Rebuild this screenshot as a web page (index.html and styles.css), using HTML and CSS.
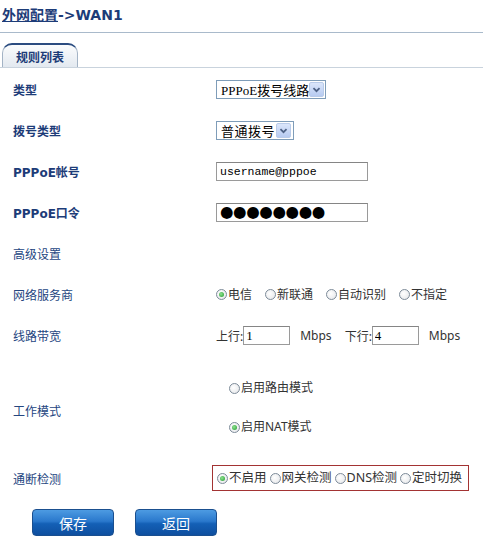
FILE: index.html
```html
<!DOCTYPE html>
<html lang="zh-CN">
  <head>
    <meta charset="UTF-8" />
    <title>外网配置 - WAN1</title>
    <link rel="stylesheet" href="styles.css">
  </head>

  <body>
    <h1 class="page-title"><a href="#">外网配置</a>-&gt;WAN1</h1>

    <div class="tabs">
      <span class="tab">规则列表</span>
    </div>

    <form class="rules">
      <div class="row">
        <span class="label strong">类型</span>
        <div class="select wide">
          <span class="select-text">PPPoE拨号线路</span>
          <span class="select-arrow"><svg viewBox="0 0 15 15"><path d="M4 6 L7.5 9.5 L11 6" /></svg></span>
        </div>
      </div>

      <div class="row">
        <span class="label strong">拨号类型</span>
        <div class="select">
          <span class="select-text big">普通拨号</span>
          <span class="select-arrow"><svg viewBox="0 0 15 15"><path d="M4 6 L7.5 9.5 L11 6" /></svg></span>
        </div>
      </div>

      <div class="row">
        <span class="label strong">PPPoE帐号</span>
        <input class="field mono" type="text" value="username@pppoe" />
      </div>

      <div class="row">
        <span class="label strong">PPPoE口令</span>
        <div class="field dots">●●●●●●●●</div>
      </div>

      <div class="row">
        <span class="label">高级设置</span>
      </div>

      <div class="row">
        <span class="label">网络服务商</span>
        <div class="radios">
          <label class="radio"><span class="dot checked"></span>电信</label>
          <label class="radio"><span class="dot"></span>新联通</label>
          <label class="radio"><span class="dot"></span>自动识别</label>
          <label class="radio"><span class="dot"></span>不指定</label>
        </div>
      </div>

      <div class="row">
        <span class="label">线路带宽</span>
        <div class="bandwidth">
          <span>上行:</span>
          <input class="field small" type="text" value="1" />
          <span class="unit">Mbps</span>
          <span class="down">下行:</span>
          <input class="field small" type="text" value="4" />
          <span class="unit">Mbps</span>
        </div>
      </div>

      <div class="row tall">
        <span class="label">工作模式</span>
        <div class="modes">
          <label class="radio"><span class="dot"></span>启用路由模式</label>
          <label class="radio"><span class="dot checked"></span>启用NAT模式</label>
        </div>
      </div>

      <div class="row short">
        <span class="label">通断检测</span>
        <div class="check-box">
          <label class="radio"><span class="dot checked"></span>不启用</label>
          <label class="radio"><span class="dot"></span>网关检测</label>
          <label class="radio"><span class="dot"></span>DNS检测</label>
          <label class="radio"><span class="dot"></span>定时切换</label>
        </div>
      </div>
    </form>

    <div class="actions">
      <button class="btn" type="button">保存</button>
      <button class="btn" type="button">返回</button>
    </div>
  </body>
</html>
```

FILE: styles.css
```css
*,
*::before,
*::after {
  box-sizing: border-box;
}

body {
  margin: 0;
  background: #fff;
  color: #333;
  font-family: 'Noto Sans', 'Noto Sans CJK SC', sans-serif;
  font-size: 12px;
}

.page-title {
  margin: 0;
  padding: 5px 2px 7px;
  line-height: 20px;
  font-family: 'DejaVu Sans', 'Noto Sans CJK SC', sans-serif;
  font-size: 14px;
  font-weight: bold;
  color: #1d3c78;
  border-bottom: 1px solid #a9bacb;

  a {
    color: #1d3c78;
    text-decoration: underline;
  }
}

.tabs {
  display: flex;
  margin-top: 10px;
  padding-left: 2px;
  border-bottom: 1px solid #c9d3dd;
}

.tab {
  width: 76px;
  height: 24px;
  display: flex;
  align-items: center;
  justify-content: center;
  border: 1px solid #a3b3c5;
  border-top: 2px solid #2b4c80;
  border-bottom: 0;
  border-radius: 10px 10px 0 0;
  background: linear-gradient(#fbfcfd, #e3e9f0);
  font-family: 'Noto Sans CJK SC', sans-serif;
  font-weight: bold;
  font-size: 12px;
  color: #1d3c78;
}

.rules {
  padding-top: 1px;
}

.row {
  display: grid;
  grid-template-columns: 203px 1fr;
  align-items: center;
  height: 41px;
  padding-left: 13px;

  &.tall {
    height: 108px;
  }

  &.short {
    height: 28px;
  }
}

.label {
  font-family: 'Noto Sans CJK SC', sans-serif;
  font-size: 12px;
  color: #25467f;

  &.strong {
    font-family: 'DejaVu Sans', 'Noto Sans CJK SC', sans-serif;
    font-weight: bold;
    color: #1d3c78;
  }
}

.select {
  display: flex;
  align-items: center;
  width: 78px;
  height: 19px;
  padding: 1px 2px 1px 4px;
  border: 1px solid #7f9db9;
  background: #fff;
  justify-content: space-between;

  &.wide {
    width: 110px;
  }

  .select-text {
    font-family: 'Liberation Serif', 'Noto Sans CJK SC', serif;
    font-size: 13px;
    color: #000;
    white-space: nowrap;

    &.big {
      letter-spacing: 0.5px;
    }
  }

  .select-arrow {
    width: 15px;
    height: 15px;
    border: 1px solid #b9cbe9;
    border-radius: 2px;
    background: linear-gradient(#dbe6fb, #b7cbf1);

    svg {
      display: block;
      width: 13px;
      height: 13px;
      fill: none;
      stroke: #4d6185;
      stroke-width: 2;
    }
  }
}

.field {
  width: 152px;
  height: 19px;
  margin: 0;
  padding: 0 3px;
  border: 1px solid #9a9a9a;
  border-top-color: #858585;
  background: #fff;
  color: #000;
  outline: none;

  &.mono {
    font-family: 'Liberation Mono', monospace;
    font-size: 11.5px;
  }

  &.dots {
    display: flex;
    align-items: center;
    font-family: 'DejaVu Sans', sans-serif;
    font-size: 15.5px;
    letter-spacing: -0.4px;
    line-height: 1;
  }

  &.small {
    width: 47px;
    font-family: 'Liberation Serif', serif;
    font-size: 13px;
    padding: 0 2px;
  }
}

.radios {
  display: flex;
  gap: 13px;
}

.radio {
  display: flex;
  align-items: center;
  font-size: 12px;
  color: #333;
  white-space: nowrap;
  line-height: 20px;
}

.dot {
  position: relative;
  width: 11px;
  height: 11px;
  border: 1px solid #7d8b99;
  border-radius: 50%;
  background: radial-gradient(circle at 40% 40%, #fff, #e2e4e7);
  margin-right: 1px;

  &.checked::after {
    content: '';
    position: absolute;
    top: 2px;
    left: 2px;
    width: 5px;
    height: 5px;
    border-radius: 50%;
    background: radial-gradient(circle at 40% 40%, #8fe28f, #1f9a2e);
  }
}

.bandwidth {
  display: flex;
  align-items: center;
  font-size: 12px;
  color: #333;

  .unit {
    margin: 0 13px 0 10px;
  }
}

.modes {
  display: flex;
  flex-direction: column;
  gap: 19px;
  align-self: start;
  padding-top: 22px;
  padding-left: 13px;
}

.check-box {
  display: flex;
  align-items: center;
  gap: 3px;
  width: fit-content;
  height: 26px;
  margin-left: -4px;
  padding: 0 6px 0 4px;
  border: 1px solid #a33333;

  .radio {
    font-size: 12.5px;
  }
}

.actions {
  display: flex;
  gap: 21px;
  margin-top: 17px;
  padding-left: 32px;
}

.btn {
  width: 82px;
  height: 27px;
  border: 1px solid #1a4f8f;
  border-radius: 4px;
  background: linear-gradient(#4d9be2, #2a78cc 45%, #1460b6 55%, #0e4f9f);
  color: #fff;
  font-family: 'Noto Sans CJK SC', sans-serif;
  font-size: 14px;
  cursor: pointer;
}
```
